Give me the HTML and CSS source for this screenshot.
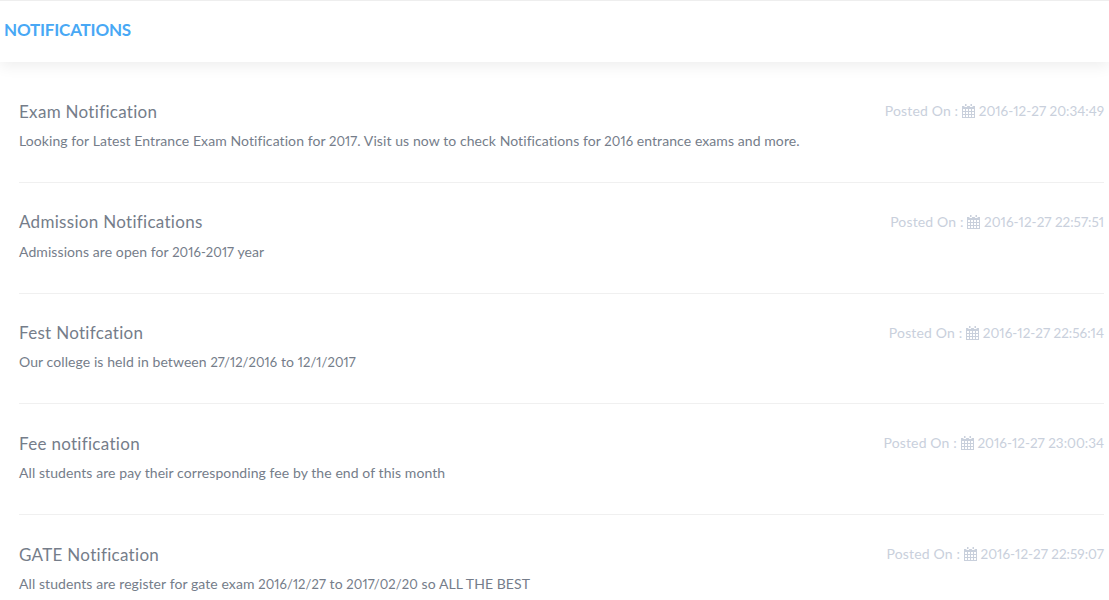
FILE: index.html
```html
<!DOCTYPE html>
<html>
<head>
    <title>Notifications</title>
    <link rel="stylesheet" href="styles.css">
</head>
<body>
    <div class="page-header">
        <h1>NOTIFICATIONS</h1>
    </div>

    <!-- Notification list -->
    <div class="notice-list">
        <div class="notice">
            <div class="notice-top">
                <h2>Exam Notification</h2>
                <span class="posted">Posted On :
                    <svg class="cal" viewBox="0 0 13 14"><use href="#cal"></use></svg>
                    <span class="stamp">2016-12-27 20:34:49</span></span>
            </div>
            <p>Looking for Latest Entrance Exam Notification for <span class="num">2017</span>. Visit us now to check Notifications for <span class="num">2016</span> entrance exams and more.</p>
        </div>
        <div class="notice">
            <div class="notice-top">
                <h2>Admission Notifications</h2>
                <span class="posted">Posted On :
                    <svg class="cal" viewBox="0 0 13 14"><use href="#cal"></use></svg>
                    <span class="stamp">2016-12-27 22:57:51</span></span>
            </div>
            <p>Admissions are open for <span class="num">2016-2017</span> year</p>
        </div>
        <div class="notice">
            <div class="notice-top">
                <h2>Fest Notifcation</h2>
                <span class="posted">Posted On :
                    <svg class="cal" viewBox="0 0 13 14"><use href="#cal"></use></svg>
                    <span class="stamp">2016-12-27 22:56:14</span></span>
            </div>
            <p>Our college is held in between <span class="num">27/12/2016</span> to <span class="num">12/1/2017</span></p>
        </div>
        <div class="notice">
            <div class="notice-top">
                <h2>Fee notification</h2>
                <span class="posted">Posted On :
                    <svg class="cal" viewBox="0 0 13 14"><use href="#cal"></use></svg>
                    <span class="stamp">2016-12-27 23:00:34</span></span>
            </div>
            <p>All students are pay their corresponding fee by the end of this month</p>
        </div>
        <div class="notice">
            <div class="notice-top">
                <h2>GATE Notification</h2>
                <span class="posted">Posted On :
                    <svg class="cal" viewBox="0 0 13 14"><use href="#cal"></use></svg>
                    <span class="stamp">2016-12-27 22:59:07</span></span>
            </div>
            <p>All students are register for gate exam <span class="num">2016/12/27</span> to <span class="num">2017/02/20</span> so ALL THE BEST</p>
        </div>
    </div>

    <svg class="defs" width="0" height="0">
        <symbol id="cal" viewBox="0 0 13 14">
            <path fill="currentColor" fill-rule="evenodd" d="M3 0h1.5v2H3zM8.5 0H10v2H8.5zM0 2h2.4v1h2.7V2h2.8v1h2.7V2H13v12H0zM1 5v2h2V5zm3 0v2h2V5zm3 0v2h2V5zm3 0v2h2V5zM1 8v2h2V8zm3 0v2h2V8zm3 0v2h2V8zm3 0v2h2V8zM1 11v2h2v-2zm3 0v2h2v-2zm3 0v2h2v-2zm3 0v2h2v-2z"/>
        </symbol>
    </svg>
</body>
</html>
```
FILE: styles.css
```css
body {
    margin: 0;
    font-family: Lato, "Open Sans", sans-serif;
    font-variant-numeric: proportional-nums;
    background-color: #fff;
    color: #757d8a;
    overflow: hidden;
}
.page-header {
    height: 57px;
    border-top: 1px solid #eee;
    padding: 0 0 4px 4px;
    display: flex;
    align-items: center;
    box-shadow: 0 4px 14px rgba(0,0,0,0.07);
}
.page-header h1 {
    margin: 0;
    font-size: 17px;
    font-weight: 700;
    letter-spacing: -0.2px;
    color: #48a8f5;
}
.notice-list {
    padding: 10px 5px 0 19px;
}
.notice {
    height: 110.75px;
    padding-top: 27.6px;
    box-sizing: border-box;
    border-bottom: 1px solid #f0f0f0;
}
.notice:last-child {
    border-bottom: none;
}
.notice-top {
    display: flex;
    justify-content: space-between;
    align-items: center;
}
.notice h2 {
    margin: 0;
    font-size: 17px;
    font-weight: 400;
    line-height: 24px;
    letter-spacing: 0.3px;
    color: #757d8a;
}
.posted {
    font-size: 14px;
    letter-spacing: 0.15px;
    padding-bottom: 2px;
    color: #c9d0dc;
}
.stamp {
    font-size: 13.5px;
    letter-spacing: 0;
}
.cal {
    width: 13px;
    height: 14px;
    vertical-align: -2px;
}
.notice p {
    margin: 7.4px 0 0;
    font-size: 14px;
    line-height: 20px;
    letter-spacing: 0.08px;
}
.num {
    font-size: 13px;
}
.defs {
    position: absolute;
}
```
